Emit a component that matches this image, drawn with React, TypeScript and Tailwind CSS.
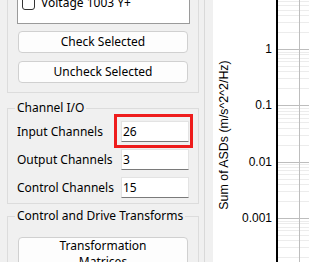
import React from 'react';

const uiFont = { fontFamily: '"Noto Sans", "Segoe UI", sans-serif' };
const plotFont = '"Liberation Sans", Arial, sans-serif';

const channels = [
  { label: 'Input Channels', value: '26', flagged: true },
  { label: 'Output Channels', value: '3', flagged: false },
  { label: 'Control Channels', value: '15', flagged: false },
];

const GroupTitle: React.FC<{ text: string }> = ({ text }) => (
  <span className="absolute -top-[9px] left-[7px] bg-[#f0f0f0] px-[2px] text-[12px] leading-[16px] text-black">
    {text}
  </span>
);

const Button: React.FC<{ children: React.ReactNode; className?: string }> = ({ children, className = '' }) => (
  <div
    className={`ml-[1px] w-[170px] rounded-[4px] border border-[#d0d0d0] bg-[#fdfdfd] text-center text-[12px] leading-[16px] text-black ${className}`}
  >
    {children}
  </div>
);

// log-scaled y axis: 1 at y=49, one decade every 56.33px
const DECADE = 56.33;
const TOP = 49;

const SumPlot: React.FC = () => {
  const majors = [0, 1, 2, 3].map(i => TOP + DECADE * i);
  const minors: number[] = [];
  for (let i = -1; i < 4; i++) {
    const bottom = TOP + DECADE * (i + 1);
    for (let k = 2; k <= 9; k++) {
      const y = bottom - DECADE * Math.log10(k);
      if (y > 0 && y < 262) minors.push(y);
    }
  }
  const labels = ['1', '0.1', '0.01', '0.001'];

  return (
    <svg width="96" height="262" viewBox="0 0 96 262" className="block">
      {minors.map((y, i) => (
        <line key={i} x1="65" x2="96" y1={Math.round(y) + 0.5} y2={Math.round(y) + 0.5} stroke="#ececec" strokeWidth="1" />
      ))}
      <line x1="86.5" x2="86.5" y1="0" y2="262" stroke="#bdbdbd" strokeWidth="1" />
      {majors.map((y, i) => (
        <line key={i} x1="65" x2="96" y1={Math.round(y) + 0.5} y2={Math.round(y) + 0.5} stroke="#bdbdbd" strokeWidth="1" />
      ))}
      <line x1="64" x2="64" y1="0" y2="262" stroke="#000" strokeWidth="2" />
      {majors.map((y, i) => (
        <text key={i} x="59" y={Math.round(y) + 4} textAnchor="end" fontSize="12" fontFamily={plotFont} fill="#000">
          {labels[i]}
        </text>
      ))}
      <text
        x="15"
        y="135"
        transform="rotate(-90 15 135)"
        textAnchor="middle"
        fontSize="12.4"
        fontFamily={plotFont}
        fill="#000"
      >
        Sum of ASDs (m/s^2^2/Hz)
      </text>
    </svg>
  );
};

export default function App() {
  return (
    <div className="flex h-[262px] w-[309px] overflow-hidden bg-[#f0f0f0]" style={uiFont}>
      <div className="flex w-[205px] shrink-0 flex-col border-r border-[#d9d9d9]">
        {/* channel list group, scrolled so its top is out of view */}
        <div className="-mt-[40px] ml-[7px] w-[192px] border border-[#dcdcdc] pt-[10px] pr-[8px] pb-[9px] pl-[9px]">
          <div className="h-[53px] border border-[#9a9a9a] bg-white pt-[23px]">
            <div className="flex h-[16px] items-center gap-[6px] pl-[4px]">
              <span className="h-[13px] w-[13px] rounded-[3px] border border-[#333] bg-white" />
              <span className="text-[12px] leading-[16px] text-black">Voltage 1003 Y+</span>
            </div>
          </div>
          <Button className="mt-[7px] h-[22px] leading-[20px]">Check Selected</Button>
          <Button className="mt-[8px] h-[22px] leading-[20px]">Uncheck Selected</Button>
        </div>

        <div className="relative mt-[15px] ml-[7px] w-[192px] border border-[#dcdcdc] pt-[12px] pr-[8px] pb-[5px] pl-[9px]">
          <GroupTitle text="Channel I/O" />
          <div className="flex flex-col gap-[7px]">
            {channels.map(c => (
              <div key={c.label} className="flex h-[21px] items-center">
                <span className="text-[12px] leading-[16px] text-black">{c.label}</span>
                <div className="relative mr-[1px] ml-auto h-[21px] w-[68px]">
                  <div className="h-full w-full border border-[#e3e3e3] border-b-[#7a7a7a] bg-white pl-[1px] text-[12px] leading-[19px] text-black">
                    {c.value}
                  </div>
                  {c.flagged && (
                    <div className="absolute -top-[7px] -left-[7px] h-[34px] w-[79px] border-[3px] border-[#ee1c1c]" />
                  )}
                </div>
              </div>
            ))}
          </div>
        </div>

        <div className="relative mt-[12px] ml-[7px] w-[192px] border border-[#dcdcdc] pt-[20px] pr-[8px] pb-[8px] pl-[9px]">
          <GroupTitle text="Control and Drive Transforms" />
          <Button className="h-[44px]">
            Transformation
            <br />
            Matrices
          </Button>
        </div>
      </div>
      <div className="w-[8px] shrink-0" />
      <div className="flex-1 bg-white">
        <SumPlot />
      </div>
    </div>
  );
}
